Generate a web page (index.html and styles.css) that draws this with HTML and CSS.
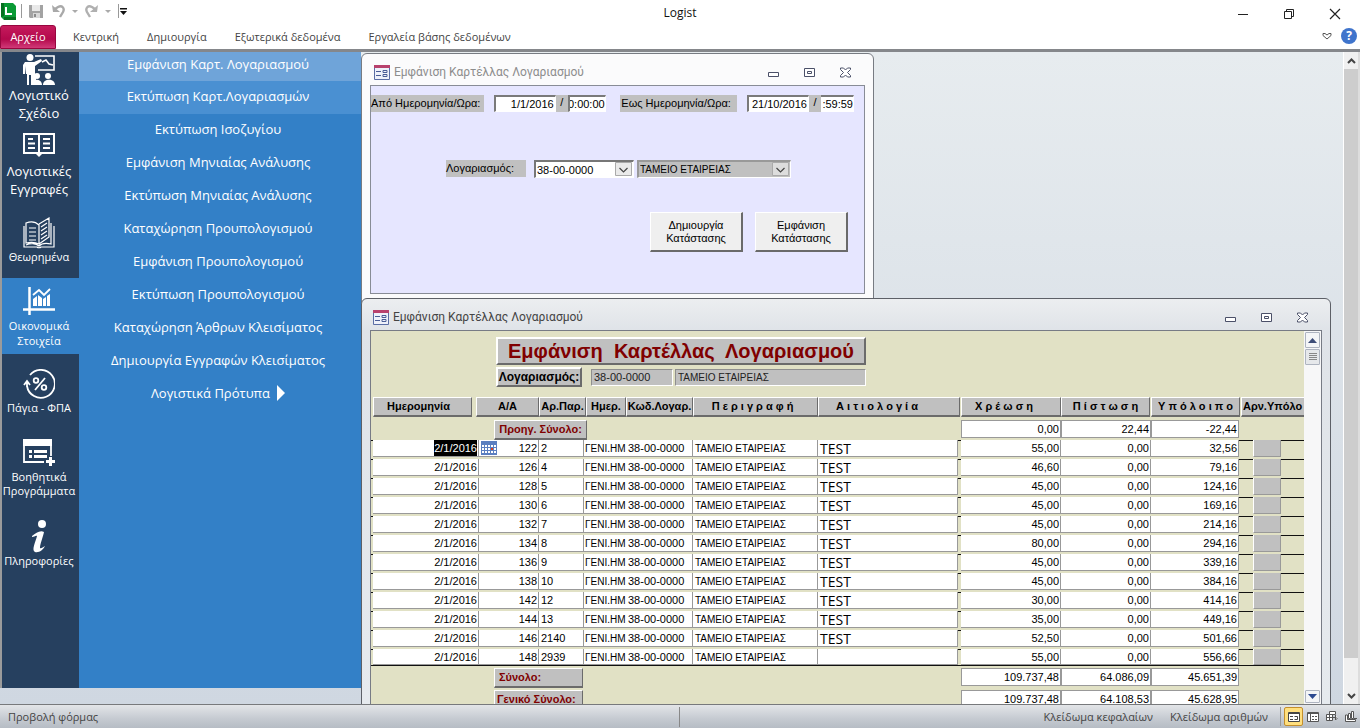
FILE: index.html
```html
<!DOCTYPE html>
<html lang="el">
<head>
<meta charset="utf-8">
<title>Logist</title>
<link rel="stylesheet" href="styles.css">
</head>
<body>
<header class="titlebar">
  <div class="quick">
    <svg class="logo" width="17" height="17" viewBox="0 0 17 17"><path d="M1 0h12l3 3v14H4l-3-3z" fill="#0a9a35"/><path d="M1 0h3v13l-3 1zM4 14h12v3H4z" fill="#06701f"/><path d="M6 4v7h6" fill="none" stroke="#fff" stroke-width="2"/></svg>
    <span class="sep"></span>
    <button aria-label="Αποθήκευση"><svg width="14" height="14" viewBox="0 0 14 14"><path d="M0 1h14v13H1l-1-1z" fill="#a3a3a3"/><path d="M3 1h8v6H3z" fill="#e9e9e9"/><path d="M4 9h7v5H4z" fill="#d8d8d8"/><path d="M5 10h2v3H5z" fill="#8b8b8b"/></svg></button>
    <button class="undo" aria-label="Αναίρεση"><svg width="13" height="14" viewBox="0 0 13 14"><path d="M3 5l3-2c4-2 7 1 5 5l-3 5" fill="none" stroke="#a9a9a9" stroke-width="2.400"/><path d="M0 1l1 7h7z" fill="#a9a9a9"/></svg></button>
    <span class="caret"></span>
    <button aria-label="Επανάληψη"><svg width="13" height="14" viewBox="0 0 13 14"><path d="M10 5L7 3C3 1 0 4 2 8l3 5" fill="none" stroke="#b0b0b0" stroke-width="2.400"/><path d="M13 1l-1 7H5z" fill="#b0b0b0"/></svg></button>
    <span class="caret"></span>
    <span class="sep"></span>
    <button class="customize" aria-label="Προσαρμογή"><svg width="7" height="7" viewBox="0 0 7 7"><path d="M0 0h7v1.500H0zM0 3h7L3.500 7z" fill="#111"/></svg></button>
  </div>
  <h1 class="app-title">Logist</h1>
  <div class="win-buttons">
    <button aria-label="Ελαχιστοποίηση"><svg width="12" height="12" viewBox="0 0 12 12"><path d="M1 6.500h10" stroke="#222"/></svg></button>
    <button aria-label="Επαναφορά"><svg width="12" height="12" viewBox="0 0 12 12" fill="none" stroke="#222"><path d="M1.500 3.500h7v7h-7zM3.500 3V1.500h7v7H9"/></svg></button>
    <button aria-label="Κλείσιμο"><svg width="12" height="12" viewBox="0 0 12 12" stroke="#222" stroke-width="1.200"><path d="M1 1l10 10M11 1L1 11"/></svg></button>
  </div>
</header>
<nav class="tabs">
  <button class="tab file">Αρχείο</button>
  <button class="tab">Κεντρική</button>
  <button class="tab">Δημιουργία</button>
  <button class="tab">Εξωτερικά δεδομένα</button>
  <button class="tab">Εργαλεία βάσης δεδομένων</button>
  <span class="tab-tools">
    <svg width="10" height="8" viewBox="0 0 10 8"><path d="M1 1.500h2l2 1.500 2-1.500h2v2L5 7 1 3.500z" fill="none" stroke="#555"/></svg>
    <button class="help" aria-label="Βοήθεια">?</button>
  </span>
</nav>
<main class="workspace">
  <div class="menus">
    <nav class="modules">
      <button class="module large"><svg width="32" height="32" viewBox="0 0 32 32" fill="#fff"><circle cx="7" cy="3.500" r="3.500"/><path d="M2 8h9l7-3 1 2-7 5v8h1v11H8V21H6v10H4V20H3v-8l-1 8H0v-9z"/><path d="M12 2h19v14H15" fill="none" stroke="#fff" stroke-width="1.600"/><path d="M19 8l4-2 3 4 4 1" fill="none" stroke="#fff" stroke-width="1.500"/><circle cx="14" cy="22" r="3"/><circle cx="25" cy="22" r="3"/><path d="M8 31c0-7 11-7 11 0zM20 31c0-7 12-7 12 0z"/></svg><span>Λογιστικό<br>Σχέδιο</span></button>
      <button class="module large spaced"><svg width="32" height="24" viewBox="0 0 32 24" fill="none" stroke="#fff" stroke-width="2"><path d="M1 1h30v19H1zM16 1v19M5 6h5M5 10.500h7M5 15h7M20 6h7M20 10.500h7M20 15h7"/><path d="M13 21h6l-3 3z" fill="#fff" stroke="none"/></svg><span>Λογιστικές<br>Εγγραφές</span></button>
      <button class="module"><svg width="32" height="32" viewBox="0 0 32 32" fill="none" stroke="#fff" stroke-width="1.200"><path d="M3 6c5-2 10-1 13 2v19c-4-2-8-2-13-1zM16 7l10-6v19l-10 7M28 6v21c-4-1-9-1-12 2-3-3-9-3-13-1M1 9v21h13c1 1 3 1 4 0h13V9"/><path d="M6 11h7M6 15h7M6 19h7M6 23h7M18 10l6-4M18 14l6-4M18 18l6-4M18 22l6-4"/></svg><span>Θεωρημένα</span></button>
      <button class="module current"><svg width="32" height="28" viewBox="0 0 32 28"><path d="M6.500 0v28M0 22.500h32" stroke="#fff" stroke-width="2.500"/><path d="M10 12l4-3v10h-4zM15 8l4 3v8h-4zM20 12l3-2v9h-3zM24 9l3-2v12h-3z" fill="#fff"/><path d="M10 8l6-5 5 5 6-6" fill="none" stroke="#fff" stroke-width="1.800"/></svg><span>Οικονομικά<br>Στοιχεία</span></button>
      <button class="module"><svg width="32" height="31" viewBox="0 0 32 31" fill="none" stroke="#fff" stroke-width="1.800"><path d="M7 6a14 14 0 1 1-3 11M1 16l3-4 3 4M4 13v5"/><path d="M22 9L12 21"/><circle cx="13" cy="11.500" r="2.300"/><circle cx="21" cy="18.500" r="2.300"/></svg><span>Πάγια - ΦΠΑ</span></button>
      <button class="module tight"><svg width="32" height="28" viewBox="0 0 32 28"><path d="M1 1v22h20M28 1v16" fill="none" stroke="#fff" stroke-width="1.800"/><path d="M0 0h29v7H0z" fill="#fff"/><path d="M6 11h3v3H6zM11 11h13v3H11zM6 16h3v3H6zM11 16h13v3H11zM26 18h3v3h3v3h-3v3h-3v-3h-3v-3h3z" fill="#fff"/></svg><span>Βοηθητικά<br>Προγράμματα</span></button>
      <button class="module"><svg width="16" height="33" viewBox="0 0 16 33" fill="#fff"><circle cx="11" cy="4" r="4"/><path d="M1 16c4-3 8-6 12-4-1 5-4 12-4 16 1 1 3-1 5-2-2 4-6 7-10 6-4-2 1-11 2-16-1-1-3 1-5 1z"/></svg><span>Πληροφορίες</span></button>
    </nav>
    <nav class="submenu">
      <button class="hot">Εμφάνιση Καρτ. Λογαριασμού</button>
      <button class="warm">Εκτύπωση Καρτ.Λογαριασμών</button>
      <button>Εκτύπωση Ισοζυγίου</button>
      <button>Εμφάνιση Μηνιαίας Ανάλυσης</button>
      <button>Εκτύπωση Μηνιαίας Ανάλυσης</button>
      <button>Καταχώρηση Προυπολογισμού</button>
      <button>Εμφάνιση Προυπολογισμού</button>
      <button>Εκτύπωση Προυπολογισμού</button>
      <button>Καταχώρηση Άρθρων Κλεισίματος</button>
      <button>Δημιουργία Εγγραφών Κλεισίματος</button>
      <button>Λογιστικά Πρότυπα <svg width="8" height="16" viewBox="0 0 8 16"><path d="M0 0l8 8-8 8z" fill="#fff"/></svg></button>
    </nav>
  </div>
  <div class="desktop">
    <section class="window form-window">
      <div class="caption">
        <svg width="16" height="15" viewBox="0 0 16 15"><path d="M.5.500h15v14H.5z" fill="#eef1fa" stroke="#5a6da5"/><path d="M0 0h16v3H0z" fill="#b8416d"/><path d="M2 6.500h5M2 10.500h5M9 5.500h4v2H9zM9 9.500h4v2H9z" fill="none" stroke="#4a5d96"/></svg>
        <h2>Εμφάνιση Καρτέλλας Λογαριασμού</h2>
        <span class="caption-buttons">
          <button aria-label="Ελαχιστοποίηση"><svg width="11" height="11" viewBox="0 0 11 11"><path d="M.5 5.500h10v4H.5z" fill="#fff" stroke="#4b5068"/></svg></button>
          <button aria-label="Μεγιστοποίηση"><svg width="11" height="11" viewBox="0 0 11 11" fill="#fff" stroke="#4b5068"><path d="M.5 1.500h10v8H.5zM3.500 4.500h4v2h-4z"/></svg></button>
          <button aria-label="Κλείσιμο"><svg width="11" height="11" viewBox="0 0 11 11"><path d="M.5 1h3l2 2 2-2h3v1.500l-3 3 3 3V10h-3l-2-2-2 2h-3V8.500l3-3-3-3z" fill="#fff" stroke="#4b5068"/></svg></button>
        </span>
      </div>
      <form class="criteria">
        <div class="row dates">
          <label class="tag from-tag" for="from-date">Από Ημερομηνία/Ωρα:</label>
          <span class="moment"><input class="field date" id="from-date" value="1/1/2016"><span class="slash">/</span><input class="field time" aria-label="Από ώρα" value="0:00:00"></span>
          <label class="tag to-tag" for="to-date">Εως Ημερομηνία/Ωρα:</label>
          <span class="moment"><input class="field date" id="to-date" value="21/10/2016"><span class="slash">/</span><input class="field time late" aria-label="Εως ώρα" value=":59:59"></span>
        </div>
        <div class="row account">
          <label class="tag account-tag" for="account">Λογαριασμός:</label>
          <span class="combo code"><select id="account"><option>38-00-0000</option></select><svg width="17" height="14" viewBox="0 0 17 14"><path d="M.5.500h16v13H.5z" fill="#eaeaea" stroke="#aaa"/><path d="M4.500 6l4 4 4-4" fill="none" stroke="#444" stroke-width="1.200"/></svg></span>
          <span class="combo name"><select aria-label="Όνομα λογαριασμού"><option>ΤΑΜΕΙΟ ΕΤΑΙΡΕΙΑΣ</option></select><svg width="17" height="14" viewBox="0 0 17 14"><path d="M.5.500h16v13H.5z" fill="#ddd" stroke="#aaa"/><path d="M4.500 6l4 4 4-4" fill="none" stroke="#444" stroke-width="1.200"/></svg></span>
        </div>
        <div class="row actions">
          <button type="button" class="push">Δημιουργία<br>Κατάστασης</button>
          <button type="button" class="push">Εμφάνιση<br>Κατάστασης</button>
        </div>
      </form>
    </section>
    <section class="window ledger-window">
      <div class="caption">
        <svg width="16" height="15" viewBox="0 0 16 15"><path d="M.5.500h15v14H.5z" fill="#eef1fa" stroke="#5a6da5"/><path d="M0 0h16v3H0z" fill="#b8416d"/><path d="M2 6.500h5M2 10.500h5M9 5.500h4v2H9zM9 9.500h4v2H9z" fill="none" stroke="#4a5d96"/></svg>
        <h2>Εμφάνιση Καρτέλλας Λογαριασμού</h2>
        <span class="caption-buttons">
          <button aria-label="Ελαχιστοποίηση"><svg width="11" height="11" viewBox="0 0 11 11"><path d="M.5 5.500h10v4H.5z" fill="#fff" stroke="#4b5068"/></svg></button>
          <button aria-label="Μεγιστοποίηση"><svg width="11" height="11" viewBox="0 0 11 11" fill="#fff" stroke="#4b5068"><path d="M.5 1.500h10v8H.5zM3.500 4.500h4v2h-4z"/></svg></button>
          <button aria-label="Κλείσιμο"><svg width="11" height="11" viewBox="0 0 11 11"><path d="M.5 1h3l2 2 2-2h3v1.500l-3 3 3 3V10h-3l-2-2-2 2h-3V8.500l3-3-3-3z" fill="#fff" stroke="#4b5068"/></svg></button>
        </span>
      </div>
      <div class="ledger-frame">
        <div class="ledger">
          <div class="ledger-head">
            <h3 class="raised banner">Εμφάνιση&nbsp; Καρτέλλας&nbsp; Λογαριασμού</h3>
            <div class="account-line">
              <label class="raised" for="ledger-code">Λογαριασμός:</label>
              <input class="sunken code" id="ledger-code" value="38-00-0000" readonly>
              <input class="sunken name" aria-label="Όνομα λογαριασμού" value="ΤΑΜΕΙΟ ΕΤΑΙΡΕΙΑΣ" readonly>
            </div>
          </div>
          <table class="entries">
            <colgroup><col class="c-mark"><col class="c-date"><col class="c-no"><col class="c-doc"><col class="c-jour"><col class="c-code"><col class="c-desc"><col><col class="c-debit"><col class="c-credit"><col class="c-balance"><col class="c-neg"></colgroup>
            <thead>
              <tr><td></td><th><div class="raised h-date">Ημερομηνία</div></th><th><div class="raised h-no">Α/Α</div></th><th><div class="raised h-doc">Αρ.Παρ.</div></th><th><div class="raised h-jour">Ημερ.</div></th><th><div class="raised">Κωδ.Λογαρ.</div></th><th><div class="raised h-desc">Π ε ρ ι γ ρ α φ ή</div></th><th><div class="raised h-reason">Α ι τ ι ο λ ο γ ί α</div></th><th><div class="raised h-debit">Χ ρ έ ω σ η</div></th><th><div class="raised h-credit">Π ί σ τ ω σ η</div></th><th><div class="raised h-balance">Υ π ό λ ο ι π ο</div></th><th><div class="raised h-neg">Αρν.Υπόλο</div></th></tr>
              <tr class="sum previous"><td colspan="2"></td><th colspan="6"><div class="raised maroon">Προηγ. Σύνολο:</div></th><td><div class="cell">0,00</div></td><td><div class="cell">22,44</div></td><td><div class="cell balance">-22,44</div></td><td></td></tr>
            </thead>
            <tbody id="rows"></tbody>
            <tfoot>
              <tr class="sum"><td colspan="2"></td><th colspan="6"><div class="raised maroon total">Σύνολο:</div></th><td><div class="cell">109.737,48</div></td><td><div class="cell">64.086,09</div></td><td><div class="cell balance">45.651,39</div></td><td></td></tr>
              <tr class="sum"><td colspan="2"></td><th colspan="6"><div class="raised maroon total grand">Γενικό Σύνολο:</div></th><td><div class="cell">109.737,48</div></td><td><div class="cell">64.108,53</div></td><td><div class="cell balance">45.628,95</div></td><td></td></tr>
            </tfoot>
          </table>
        </div>
        <div class="inner-scroll">
          <button aria-label="Πάνω"><svg width="9" height="5" viewBox="0 0 9 5"><path d="M0 5l4.500-5L9 5z" fill="#3d4d78"/></svg></button>
          <span class="grip"><svg width="8" height="8" viewBox="0 0 8 8"><path d="M0 .5h8M0 2.500h8M0 4.500h8M0 6.500h8" stroke="#888"/></svg></span>
          <button class="down" aria-label="Κάτω"><svg width="9" height="5" viewBox="0 0 9 5"><path d="M0 0l4.500 5L9 0z" fill="#2d4a91"/></svg></button>
        </div>
      </div>
    </section>
  </div>
  <div class="outer-scroll">
    <button aria-label="Πάνω"><svg width="9" height="6" viewBox="0 0 9 6"><path d="M1 5l3.500-3.500L8 5" fill="none" stroke="#444" stroke-width="2"/></svg></button>
    <span class="thumb"></span>
    <button class="down" aria-label="Κάτω"><svg width="9" height="6" viewBox="0 0 9 6"><path d="M1 1l3.500 3.500L8 1" fill="none" stroke="#444" stroke-width="2"/></svg></button>
  </div>
</main>
<footer class="statusbar">
  <span class="mode">Προβολή φόρμας</span>
  <span class="locks"><span>Κλείδωμα κεφαλαίων</span><span>Κλείδωμα αριθμών</span></span>
  <span class="views">
    <button class="on" aria-label="Προβολή φόρμας"><svg width="12" height="10" viewBox="0 0 12 10"><path d="M.5.500h11v9H.5z" fill="#fff" stroke="#444"/><path d="M0 1.500h12M2 4.500h3M2 7.500h3M6.500 4.500h3v3h-3" fill="none" stroke="#444"/></svg></button>
    <button aria-label="Φύλλο δεδομένων"><svg width="12" height="10" viewBox="0 0 12 10"><path d="M.5.500h11v9H.5z" fill="#fff" stroke="#555"/><path d="M0 1.500h12M3.500 2v8M5 4.500h2M8 4.500h2M5 7.500h2M8 7.500h2" stroke="#555"/></svg></button>
    <button aria-label="Συγκεντρωτικός πίνακας"><svg width="12" height="11" viewBox="0 0 12 11" fill="#fff" stroke="#555"><path d="M3.500.500h6v3h-6zM.5 3.500h6v6h-6zM3.500 3.500v6M.5 6.500h10M9.500 4v5l2-2"/></svg></button>
    <button aria-label="Συγκεντρωτικό γράφημα"><svg width="12" height="11" viewBox="0 0 12 11" fill="#fff" stroke="#555"><path d="M3.500 2.500h2v5h-2zM6.500.500h2v7h-2zM.5 4v6.500h10V8.500h-8V4zM9 7.500h3"/></svg></button>
  </span>
</footer>
<script src="rows.js"></script>
</body>
</html>
```

FILE: styles.css
```css
* { box-sizing: border-box; }
body { margin: 0; height: 100vh; display: flex; flex-direction: column; overflow: hidden; background: #fff; font-family: "Open Sans", "Noto Sans", sans-serif; font-size: 11px; color: #444; }
button { font: inherit; color: inherit; border: 0; background: none; padding: 0; margin: 0; }
h1, h2, h3 { margin: 0; font-weight: normal; }
svg { display: block; flex: none; }

.titlebar { height: 24px; flex: none; display: grid; grid-template-columns: 1fr auto 1fr; align-items: center; }
.quick { display: flex; align-items: center; gap: 7px; height: 24px; padding-bottom: 2px; }
.logo { margin-right: -3px; }
.sep { width: 1px; height: 14px; background: #999; }
.quick button { display: flex; }
.undo { margin-left: 2px; }
.quick .customize { margin-left: -6px; }
.caret { border: 3px solid transparent; border-top-color: #aaa; border-bottom: 0; }
.app-title { font-size: 12px; color: #111; }
.win-buttons { justify-self: end; display: flex; gap: 34px; padding: 4px 19px 0 0; }

.tabs { height: 25px; flex: none; display: flex; align-items: stretch; }
.tab { padding: 0 14px 1px; height: 25px; }
.tab.file { margin: 1px 3px 0 0; height: 24px; padding: 0 0 2px; width: 56px; color: #fff; border-radius: 3px 3px 0 0; background: linear-gradient(#c51a5c, #b3094c 60%, #d13a78); border: 1px solid #97063f; }
.tab-tools { margin-left: auto; padding: 0 3px 1px 0; display: flex; align-items: center; gap: 9px; }
.help { width: 16px; height: 16px; line-height: 16px; border-radius: 8px; background: #3f74cc; color: #fff; font-weight: bold; font-size: 12px; }

.workspace { flex: 1; min-height: 0; display: flex; border-top: 3px solid #85878b; border-bottom: 1px solid #77797c; background: linear-gradient(#e7ecef, #cfd7e1); }
.menus { width: 361px; flex: none; display: flex; margin-bottom: 16px; color: #fff; border-left: 2px solid #9b9b9b; }
.modules { width: 77px; background: #26405f; display: flex; flex-direction: column; }
.module { height: 76px; padding-right: 3px; display: flex; flex-direction: column; align-items: center; justify-content: center; font-size: 11px; line-height: 15px; white-space: nowrap; }
.module:first-child { height: 74px; padding-bottom: 2px; }
.module.large { font-size: 13px; line-height: 18px; }
.module.spaced { gap: 5px; padding-top: 3px; }
.module.tight { line-height: 14px; gap: 3px; }
.module.current { background: #3380c7; gap: 3px; padding-top: 3px; }
.submenu { flex: 1; background: #3380c7; display: flex; flex-direction: column; }
.submenu button { height: 33px; display: flex; align-items: center; justify-content: center; gap: 7px; font-size: 13px; padding: 0 4px 3px 0; }
.submenu .hot { height: 29px; padding-bottom: 5px; background: #6fa4d9; }
.submenu .warm { background: #4a90d2; }

.desktop { flex: 1; position: relative; overflow: hidden; }
.window { position: absolute; left: 0; display: flex; flex-direction: column; border: 1px solid #777b82; border-radius: 6px 6px 0 0; padding: 0 8px; }
.form-window { top: 1px; width: 513px; height: 250px; background: #fbfbfc; }
.ledger-window { top: 246px; right: 12px; bottom: -1px; border-color: #5d6067; background: linear-gradient(#eceef0, #dfe3e8 32px, #e6eaee); }
.caption { height: 31px; flex: none; padding: 5px 8px 0 3px; display: flex; align-items: center; gap: 4px; }
.caption h2 { font-size: 12px; font-family: Roboto, "Open Sans", sans-serif; color: #444; }
.form-window .caption { padding-left: 4px; }
.form-window .caption h2 { color: #8d8d8d; }
.caption-buttons { margin-left: auto; display: flex; gap: 25px; padding-right: 6px; }

.criteria { height: 209px; border: 1px solid #888c96; background: #e6e6ff; padding: 9px 10px 0 0; color: #000; font-family: "Liberation Sans", Arial, sans-serif; font-size: 11px; }
.row { display: flex; }
.tag { background: #c0c0c0; height: 17px; line-height: 16px; white-space: nowrap; }
.dates { justify-content: space-between; }
.from-tag { width: 113px; }
.to-tag { width: 117px; padding-left: 1px; margin-left: 5px; }
.moment { display: flex; background: #c0c0c0; height: 17px; }
.field { font: inherit; color: #000; height: 17px; padding: 0 1px; text-align: right; background: #fff; border: 1px solid #fff; border-top: 2px solid #7a7a7a; border-left: 2px solid #7a7a7a; border-radius: 0; margin: 0; }
.field.date { width: 62px; }
.field.time { width: 38px; padding: 0; text-indent: -4px; }
.field.late { width: 33px; border-left: 0; text-indent: 0; }
.slash { width: 12px; text-align: center; line-height: 15px; }
.account { margin: 48px 0 0 75px; }
.account-tag { width: 80px; margin-right: 8px; }
.combo { position: relative; height: 18px; }
.combo select { appearance: none; font: inherit; color: #000; width: 100%; height: 18px; padding: 0 1px; background: #fff; border: 1px solid #fff; border-top: 2px solid #777; border-left: 2px solid #777; border-radius: 0; }
.combo svg { position: absolute; right: 2px; top: 2px; }
.combo.code { width: 100px; margin-right: 3px; }
.combo.name { width: 154px; }
.combo.name select { background: #c0c0c0; font-size: 10px; border-color: #999 #fff #fff #999; }
.actions { justify-content: flex-end; gap: 12px; margin-top: 34px; padding-right: 6px; }
.push { width: 93px; height: 40px; line-height: 13px; background: #efefef; border: 1px solid #fff; border-right: 2px solid #6a6a6a; border-bottom: 2px solid #6a6a6a; }

.ledger-frame { flex: 1; min-height: 0; display: flex; border: 1px solid #777b85; border-bottom: 0; }
.ledger { flex: 1; min-width: 0; overflow: hidden; background: #e1e1c5; color: #000; font-family: "Liberation Sans", Arial, sans-serif; font-size: 11px; }
.raised { background: #c0c0c0; border: 2px solid #fff; border-right-color: #6b6b6b; border-bottom-color: #6b6b6b; font-weight: bold; white-space: nowrap; overflow: hidden; text-align: center; }
.ledger-head { margin-left: 125px; width: 370px; padding-top: 6px; }
.banner { height: 28px; line-height: 25px; font-size: 20px; color: #800000; }
.account-line { display: flex; align-items: center; margin-top: 2px; }
.account-line .raised { width: 86px; height: 20px; line-height: 16px; font-size: 12px; }
.sunken { font: inherit; height: 17px; padding: 0 2px; border: 1px solid #fff; border-top-color: #8f8f8f; border-left-color: #8f8f8f; background: #c0c0c0; border-radius: 0; color: #222; }
.sunken.code { width: 82px; margin: 0 2px 0 9px; }
.sunken.name { flex: 1; min-width: 0; font-size: 10px; }

.entries { width: 100%; margin-top: 10px; table-layout: fixed; border-collapse: collapse; }
.entries th, .entries td { padding: 0; vertical-align: top; }
.c-mark { width: 2px; } .c-date { width: 106px; } .c-no { width: 60px; } .c-doc { width: 45px; } .c-jour { width: 42px; } .c-code { width: 67px; }
.c-desc { width: 125px; } .c-debit { width: 100px; } .c-credit { width: 90px; } .c-balance { width: 90px; } .c-neg { width: 63px; }
th .raised { height: 20px; line-height: 17px; border-width: 1px; border-bottom-width: 2px; }
.h-date { margin-right: 7px; padding-right: 8px; }
.h-no { margin-left: -3px; }
.h-doc { margin-right: -2px; }
.h-jour { margin-left: 2px; }
.h-desc { padding-right: 6px; }
.h-reason { margin-right: 1px; padding-right: 24px; }
.h-debit { padding-right: 14px; }
.h-credit, .h-balance { margin-right: 1px; }
.h-neg { text-align: left; border-right: 0; padding-left: 1px; }
.cell { height: 17px; line-height: 17px; padding: 0 1px 0 2px; background: #fff; border: solid #999; border-width: 0 1px 1px 0; white-space: nowrap; overflow: hidden; text-align: right; }
.sum { height: 22px; }
.sum .cell { height: 18px; line-height: 16px; border-top: 1px solid #999; border-left: 1px solid #999; }
.previous { height: 23px; }
.previous td, .previous th { padding-top: 3px; }
.previous .maroon { width: 93px; }
th .maroon { color: #800000; margin-left: 15px; }
.total { width: 89px; text-align: left; padding-left: 4px; }
.grand { padding-left: 2px; }
.entries tbody tr { height: 19px; background: linear-gradient(#111, #111) 0 0 / 100% 1px no-repeat; }
.entries tbody tr:last-child { height: 16px; }
.entries tbody tr:last-child .cell { height: 16px; }
.left { text-align: left; }
.greek { font-size: 10px; padding-right: 0; }
.journal { padding-left: 1px; border-right: 0; }
.reason { margin-right: 3px; font-family: "Open Sans", sans-serif; font-size: 14px; }
.balance { margin-right: 2px; }
.negative { width: 28px; margin-left: 12px; background: #c0c0c0; border-left: 1px solid #fff; }
.picker { display: flex; justify-content: space-between; align-items: center; }
.selected { background: #000; color: #fff; padding: 2px 0; }
.entries tfoot tr:first-child { height: 24px; }
.entries tfoot tr:first-child td, .entries tfoot tr:first-child th { padding-top: 2px; border-top: 1px solid #111; }

.inner-scroll { width: 17px; flex: none; background: #f7f7f8; display: flex; flex-direction: column; padding: 1px; }
.inner-scroll button, .grip { height: 16px; display: flex; align-items: center; justify-content: center; border: 1px solid #aeb4c0; background: #f4f5f7; border-radius: 1px; }
.grip { margin-top: 1px; background: #e6e8eb; }
.inner-scroll .down { margin-top: auto; height: 13px; }
.outer-scroll { width: 17px; flex: none; background: #f0f0f0; border-left: 1px solid #fff; border-right: 2px solid #ddd; display: flex; flex-direction: column; }
.outer-scroll button { height: 17px; display: flex; align-items: center; justify-content: center; }
.thumb { flex: 1; background: #cdcdcd; margin-bottom: 29px; }

.statusbar { height: 23px; flex: none; display: flex; align-items: center; background: linear-gradient(#e3e5e8, #c5cad1 60%, #b6bcc4); }
.mode { width: 50%; padding-left: 8px; border-right: 1px solid #888; line-height: 20px; }
.locks { flex: 1; display: flex; justify-content: flex-end; gap: 17px; padding-right: 12px; }
.views { display: flex; border-left: 1px solid #999; padding-left: 3px; }
.views button { width: 19px; height: 19px; display: flex; align-items: center; justify-content: center; }
.views .on { border: 1px solid #c48f2c; background: #ffdf7e; border-radius: 2px; }
```

FILE: rows.js
```js
const entries = [
  ["122", "2", "55,00", "32,56"], ["126", "4", "46,60", "79,16"], ["128", "5", "45,00", "124,16"],
  ["130", "6", "45,00", "169,16"], ["132", "7", "45,00", "214,16"], ["134", "8", "80,00", "294,16"],
  ["136", "9", "45,00", "339,16"], ["138", "10", "45,00", "384,16"], ["142", "12", "30,00", "414,16"],
  ["144", "13", "35,00", "449,16"], ["146", "2140", "52,50", "501,66"], ["148", "2939", "55,00", "556,66"]
];
const calendar = '<svg width="16" height="14" viewBox="0 0 16 14"><path d="M0 0h16v14H0z" fill="#5b7fc0"/><path d="M1 4h2v2H1zM4 4h2v2H4zM7 4h2v2H7zM10 4h2v2h-2zM13 4h2v2h-2zM1 7h2v2H1zM4 7h2v2H4zM7 7h2v2H7zM13 7h2v2h-2zM1 10h2v2H1zM4 10h2v2H4zM7 10h2v2H7zM10 10h2v2h-2zM13 10h2v2h-2z" fill="#fff"/><path d="M10 7h2v2h-2z" fill="#e0401c"/></svg>';
document.getElementById("rows").innerHTML = entries.map(([no, doc, debit, balance], i) => {
  const first = i === 0, last = i === entries.length - 1;
  const cell = (text, cls = "") => `<td><div class="cell ${cls}">${text}</div></td>`;
  return "<tr><td></td>" +
    cell(first ? '<span class="selected">2/1/2016</span>' : "2/1/2016") +
    cell(first ? calendar + "<span>" + no + "</span>" : no, first ? "picker" : "") +
    cell(doc, "left") + cell("ΓΕΝΙ.ΗΜ", "left greek journal") + cell("38-00-0000", "left") +
    cell("ΤΑΜΕΙΟ ΕΤΑΙΡΕΙΑΣ", "left greek") + cell(last ? "" : "TEST", "left reason") +
    cell(debit) + cell("0,00") + cell(balance, "balance") + cell("", "negative") + "</tr>";
}).join("");
```
